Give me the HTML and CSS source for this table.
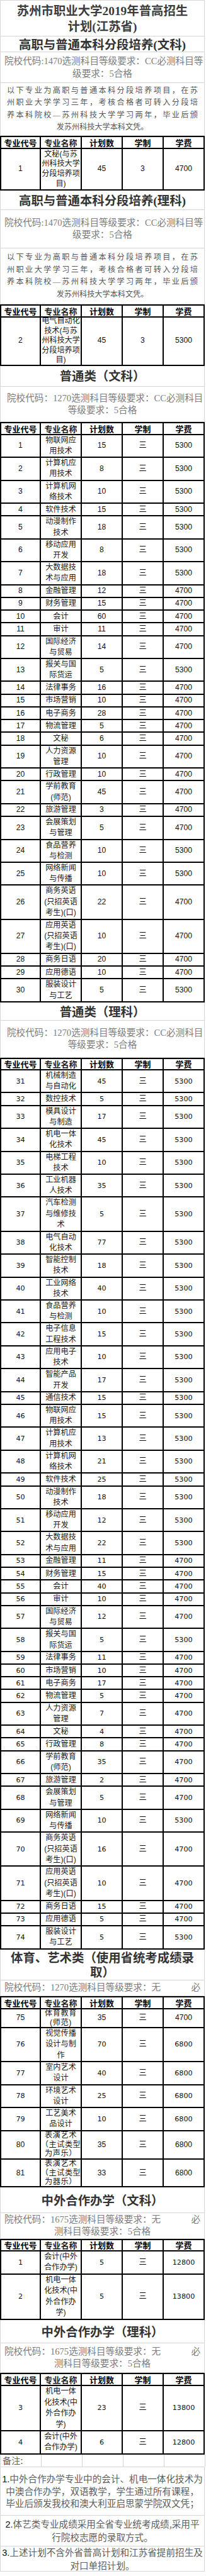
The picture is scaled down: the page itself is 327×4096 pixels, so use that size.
FILE: index.html
```html
<!DOCTYPE html>
<html lang="zh-CN">
<head>
<meta charset="utf-8">
<title>苏州市职业大学2019年普高招生计划(江苏省)</title>
<link rel="stylesheet" href="styles.css">
</head>
<body>
<div class="sheet">
  <div class="blk title">苏州市职业大学2019年普高招生<br>计划(江苏省)</div>

  <div class="blk sec s1">高职与普通本科分段培养(文科)</div>
  <div class="blk info i1"><div class="jl p8">院校代码:1470选测科目等级要求：CC必测科目等</div><div>级要求：5合格</div></div>
  <div class="blk desc d1"><div class="jl pd">以下专业为高职与普通本科分段培养项目，在苏</div><div class="jl pd">州职业大学学习三年，考核合格者可转入分段培</div><div class="jl pd">养本科院校—苏州科技大学学习两年，毕业后颁</div><div>发苏州科技大学本科文凭。</div></div>
  <div class="tbl">
    <div class="row hd hd1"><span>专业代号</span><span>专业名称</span><span>计划数</span><span>学制</span><span>学费</span></div>
    <div class="row ra"><span>1</span><span class="nm">文秘(与苏<br>州科技大学<br>分段培养项<br>目)</span><span>45</span><span>3</span><span>4700</span></div>
  </div>

  <div class="blk sec s2">高职与普通本科分段培养(理科)</div>
  <div class="blk info i2"><div class="jl p8">院校代码:1470选测科目等级要求：CC必测科目等</div><div>级要求：5合格</div></div>
  <div class="blk desc d2"><div class="jl pd">以下专业为高职与普通本科分段培养项目，在苏</div><div class="jl pd">州职业大学学习三年，考核合格者可转入分段培</div><div class="jl pd">养本科院校—苏州科技大学学习两年，毕业后颁</div><div>发苏州科技大学本科文凭。</div></div>
  <div class="tbl">
    <div class="row hd"><span>专业代号</span><span>专业名称</span><span>计划数</span><span>学制</span><span>学费</span></div>
    <div class="row rb"><span>2</span><span class="nm">电气自动化<br>技术(与苏<br>州科技大学<br>分段培养项<br>目)</span><span>45</span><span>3</span><span>5300</span></div>
  </div>

  <div class="blk sec s3">普通类（文科）</div>
  <div class="blk info i3"><div class="jl p13">院校代码：1270选测科目等级要求：CC必测科目</div><div>等级要求：5合格</div></div>
  <div class="tbl">
    <div class="row hd"><span>专业代号</span><span>专业名称</span><span>计划数</span><span>学制</span><span>学费</span></div>
    <div class="row r2"><span>1</span><span>物联网应<br>用技术</span><span>15</span><span>三</span><span>5300</span></div>
    <div class="row r2"><span>2</span><span>计算机应<br>用技术</span><span>8</span><span>三</span><span>5300</span></div>
    <div class="row r2"><span>3</span><span>计算机网<br>络技术</span><span>10</span><span>三</span><span>5300</span></div>
    <div class="row r1"><span>4</span><span>软件技术</span><span>15</span><span>三</span><span>5300</span></div>
    <div class="row r2"><span>5</span><span>动漫制作<br>技术</span><span>18</span><span>三</span><span>5300</span></div>
    <div class="row r2"><span>6</span><span>移动应用<br>开发</span><span>8</span><span>三</span><span>5300</span></div>
    <div class="row r2"><span>7</span><span>大数据技<br>术与应用</span><span>18</span><span>三</span><span>5300</span></div>
    <div class="row r1"><span>8</span><span>金融管理</span><span>12</span><span>三</span><span>4700</span></div>
    <div class="row r1"><span>9</span><span>财务管理</span><span>15</span><span>三</span><span>4700</span></div>
    <div class="row r1"><span>10</span><span>会计</span><span>60</span><span>三</span><span>4700</span></div>
    <div class="row r1"><span>11</span><span>审计</span><span>11</span><span>三</span><span>4700</span></div>
    <div class="row r2"><span>12</span><span>国际经济<br>与贸易</span><span>14</span><span>三</span><span>4700</span></div>
    <div class="row r2"><span>13</span><span>报关与国<br>际货运</span><span>5</span><span>三</span><span>5300</span></div>
    <div class="row r1"><span>14</span><span>法律事务</span><span>16</span><span>三</span><span>4700</span></div>
    <div class="row r1"><span>15</span><span>市场营销</span><span>10</span><span>三</span><span>4700</span></div>
    <div class="row r1"><span>16</span><span>电子商务</span><span>28</span><span>三</span><span>4700</span></div>
    <div class="row r1"><span>17</span><span>物流管理</span><span>5</span><span>三</span><span>4700</span></div>
    <div class="row r1"><span>18</span><span>文秘</span><span>6</span><span>三</span><span>4700</span></div>
    <div class="row r2"><span>19</span><span>人力资源<br>管理</span><span>10</span><span>三</span><span>4700</span></div>
    <div class="row r1"><span>20</span><span>行政管理</span><span>10</span><span>三</span><span>4700</span></div>
    <div class="row r2"><span>21</span><span>学前教育<br>(师范)</span><span>45</span><span>三</span><span>4700</span></div>
    <div class="row r1"><span>22</span><span>旅游管理</span><span>3</span><span>三</span><span>4700</span></div>
    <div class="row r2"><span>23</span><span>会展策划<br>与管理</span><span>5</span><span>三</span><span>4700</span></div>
    <div class="row r2"><span>24</span><span>食品营养<br>与检测</span><span>10</span><span>三</span><span>5300</span></div>
    <div class="row r2"><span>25</span><span>网络新闻<br>与传播</span><span>10</span><span>三</span><span>5300</span></div>
    <div class="row r3"><span>26</span><span>商务英语<br>(只招英语<br>考生)(口)</span><span>22</span><span>三</span><span>4700</span></div>
    <div class="row r3"><span>27</span><span>应用英语<br>(只招英语<br>考生)(口)</span><span>10</span><span>三</span><span>4700</span></div>
    <div class="row r1"><span>28</span><span>商务日语</span><span>20</span><span>三</span><span>4700</span></div>
    <div class="row r1"><span>29</span><span>应用德语</span><span>10</span><span>三</span><span>4700</span></div>
    <div class="row r2"><span>30</span><span>服装设计<br>与工艺</span><span>5</span><span>三</span><span>5300</span></div>
  </div>

  <div class="blk sec s4">普通类（理科）</div>
  <div class="blk info i4"><div class="jl p13">院校代码：1270选测科目等级要求：CC必测科目</div><div>等级要求：5合格</div></div>
  <div class="tbl wide">
    <div class="row hd"><span>专业代号</span><span>专业名称</span><span>计划数</span><span>学制</span><span>学费</span></div>
    <div class="row r2"><span>31</span><span>机械制造<br>与自动化</span><span>45</span><span>三</span><span>5300</span></div>
    <div class="row r1"><span>32</span><span>数控技术</span><span>5</span><span>三</span><span>5300</span></div>
    <div class="row r2"><span>33</span><span>模具设计<br>与制造</span><span>17</span><span>三</span><span>5300</span></div>
    <div class="row r2"><span>34</span><span>机电一体<br>化技术</span><span>45</span><span>三</span><span>5300</span></div>
    <div class="row r2"><span>35</span><span>电梯工程<br>技术</span><span>10</span><span>三</span><span>5300</span></div>
    <div class="row r2"><span>36</span><span>工业机器<br>人技术</span><span>35</span><span>三</span><span>5300</span></div>
    <div class="row r3"><span>37</span><span>汽车检测<br>与维修技<br>术</span><span>5</span><span>三</span><span>5300</span></div>
    <div class="row r2"><span>38</span><span>电气自动<br>化技术</span><span>77</span><span>三</span><span>5300</span></div>
    <div class="row r2"><span>39</span><span>智能控制<br>技术</span><span>18</span><span>三</span><span>5300</span></div>
    <div class="row r2"><span>40</span><span>工业网络<br>技术</span><span>40</span><span>三</span><span>5300</span></div>
    <div class="row r2"><span>41</span><span>食品营养<br>与检测</span><span>10</span><span>三</span><span>5300</span></div>
    <div class="row r2"><span>42</span><span>电子信息<br>工程技术</span><span>15</span><span>三</span><span>5300</span></div>
    <div class="row r2"><span>43</span><span>应用电子<br>技术</span><span>10</span><span>三</span><span>5300</span></div>
    <div class="row r2"><span>44</span><span>智能产品<br>开发</span><span>17</span><span>三</span><span>5300</span></div>
    <div class="row r1"><span>45</span><span>通信技术</span><span>15</span><span>三</span><span>5300</span></div>
    <div class="row r2"><span>46</span><span>物联网应<br>用技术</span><span>15</span><span>三</span><span>5300</span></div>
    <div class="row r2"><span>47</span><span>计算机应<br>用技术</span><span>13</span><span>三</span><span>5300</span></div>
    <div class="row r2"><span>48</span><span>计算机网<br>络技术</span><span>21</span><span>三</span><span>5300</span></div>
    <div class="row r1"><span>49</span><span>软件技术</span><span>25</span><span>三</span><span>5300</span></div>
    <div class="row r2"><span>50</span><span>动漫制作<br>技术</span><span>18</span><span>三</span><span>5300</span></div>
    <div class="row r2"><span>51</span><span>移动应用<br>开发</span><span>12</span><span>三</span><span>5300</span></div>
    <div class="row r2"><span>52</span><span>大数据技<br>术与应用</span><span>22</span><span>三</span><span>5300</span></div>
    <div class="row r1"><span>53</span><span>金融管理</span><span>11</span><span>三</span><span>4700</span></div>
    <div class="row r1"><span>54</span><span>财务管理</span><span>15</span><span>三</span><span>4700</span></div>
    <div class="row r1"><span>55</span><span>会计</span><span>40</span><span>三</span><span>4700</span></div>
    <div class="row r1"><span>56</span><span>审计</span><span>10</span><span>三</span><span>4700</span></div>
    <div class="row r2"><span>57</span><span>国际经济<br>与贸易</span><span>12</span><span>三</span><span>4700</span></div>
    <div class="row r2"><span>58</span><span>报关与国<br>际货运</span><span>5</span><span>三</span><span>5300</span></div>
    <div class="row r1"><span>59</span><span>法律事务</span><span>11</span><span>三</span><span>4700</span></div>
    <div class="row r1"><span>60</span><span>市场营销</span><span>10</span><span>三</span><span>4700</span></div>
    <div class="row r1"><span>61</span><span>电子商务</span><span>17</span><span>三</span><span>4700</span></div>
    <div class="row r1"><span>62</span><span>物流管理</span><span>5</span><span>三</span><span>4700</span></div>
    <div class="row r2"><span>63</span><span>人力资源<br>管理</span><span>7</span><span>三</span><span>4700</span></div>
    <div class="row r1"><span>64</span><span>文秘</span><span>4</span><span>三</span><span>4700</span></div>
    <div class="row r1"><span>65</span><span>行政管理</span><span>8</span><span>三</span><span>4700</span></div>
    <div class="row r2"><span>66</span><span>学前教育<br>(师范)</span><span>35</span><span>三</span><span>4700</span></div>
    <div class="row r1"><span>67</span><span>旅游管理</span><span>2</span><span>三</span><span>4700</span></div>
    <div class="row r2"><span>68</span><span>会展策划<br>与管理</span><span>5</span><span>三</span><span>4700</span></div>
    <div class="row r2"><span>69</span><span>网络新闻<br>与传播</span><span>10</span><span>三</span><span>5300</span></div>
    <div class="row r3"><span>70</span><span>商务英语<br>(只招英语<br>考生)(口)</span><span>16</span><span>三</span><span>4700</span></div>
    <div class="row r3"><span>71</span><span>应用英语<br>(只招英语<br>考生)(口)</span><span>10</span><span>三</span><span>4700</span></div>
    <div class="row r1"><span>72</span><span>商务日语</span><span>15</span><span>三</span><span>4700</span></div>
    <div class="row r1"><span>73</span><span>应用德语</span><span>5</span><span>三</span><span>4700</span></div>
    <div class="row r2"><span>74</span><span>服装设计<br>与工艺</span><span>5</span><span>三</span><span>5300</span></div>
  </div>

  <div class="blk sec s5">体育、艺术类（使用省统考成绩录<br>取）</div>
  <div class="blk info i5"><div class="split"><span>院校代码：1270选测科目等级要求：无</span><span>必</span></div><div>测科目等级要求：5合格</div></div>
  <div class="tbl">
    <div class="row hd hd5"><span>专业代号</span><span>专业名称</span><span>计划数</span><span>学制</span><span>学费</span></div>
    <div class="row r75"><span>75</span><span class="sp">体育教育<br>(师范)</span><span>35</span><span>三</span><span>4700</span></div>
    <div class="row r3 wide"><span>76</span><span>视觉传播<br>设计与制<br>作</span><span>70</span><span>三</span><span>6800</span></div>
    <div class="row r2 wide"><span>77</span><span>室内艺术<br>设计</span><span>40</span><span>三</span><span>6800</span></div>
    <div class="row r2 wide"><span>78</span><span>环境艺术<br>设计</span><span>25</span><span>三</span><span>6800</span></div>
    <div class="row r2 wide"><span>79</span><span>工艺美术<br>品设计</span><span>10</span><span>三</span><span>6800</span></div>
    <div class="row r80"><span>80</span><span class="sp">表演艺术<br>（主试类型<br>为声乐）</span><span>35</span><span>三</span><span>6800</span></div>
    <div class="row r81"><span>81</span><span class="sp">表演艺术<br>（主试类型<br>为器乐）</span><span>33</span><span>三</span><span>6800</span></div>
  </div>

  <div class="blk sec s6">中外合作办学（文科）</div>
  <div class="blk info i6"><div class="split"><span>院校代码：1675选测科目等级要求：无</span><span>必</span></div><div>测科目等级要求：5合格</div></div>
  <div class="tbl wide">
    <div class="row hd"><span>专业代号</span><span>专业名称</span><span>计划数</span><span>学制</span><span>学费</span></div>
    <div class="row rz1"><span>1</span><span>会计(中外<br>合作办学)</span><span>5</span><span>三</span><span>12800</span></div>
    <div class="row r4"><span>2</span><span>机电一体<br>化技术(中<br>外合作办<br>学)</span><span>5</span><span>三</span><span>13800</span></div>
  </div>

  <div class="blk sec s7">中外合作办学（理科）</div>
  <div class="blk info i7"><div class="split"><span>院校代码：1675选测科目等级要求：无</span><span>必</span></div><div>测科目等级要求：5合格</div></div>
  <div class="tbl wide">
    <div class="row hd hd7"><span>专业代号</span><span>专业名称</span><span>计划数</span><span>学制</span><span>学费</span></div>
    <div class="row r4"><span>3</span><span>机电一体<br>化技术(中<br>外合作办<br>学)</span><span>23</span><span>三</span><span>13800</span></div>
    <div class="row r2"><span>4</span><span>会计(中外<br>合作办学)</span><span>6</span><span>三</span><span>12800</span></div>
  </div>

  <div class="remark"><span class="rk">备注:</span><span></span><span></span><span></span><span></span></div>
  <div class="blk note n1"><div><b>1.</b>中外合作办学专业中的会计、机电一体化技术为</div><div>中澳合作办学，双语教学，学生通过所有课程，</div><div>毕业后颁发我校和澳大利亚启思蒙学院双文凭；</div></div>
  <div class="blk note n2"><div><b>2.</b>体艺类专业成绩采用全省专业统考成绩,采用平</div><div>行院校志愿的录取方式。</div></div>
  <div class="blk note n3"><div><b>3.</b>上述计划不含外省普高计划和江苏省提前招生及</div><div>对口单招计划。</div></div>
</div>
</body>
</html>
```

FILE: styles.css
```css
* {
  box-sizing: border-box;
  margin: 0;
  padding: 0;
}

html,
body {
  background: #ffffff;
}

body {
  margin: 0;
  width: 327px;
}

.sheet {
  width: 325px;
  border-top: 1px solid #d6d6d6;
  font-family: "Liberation Serif", "Noto Sans CJK SC", serif;
}

/* gray spreadsheet blocks */
.blk {
  display: flex;
  flex-direction: column;
  justify-content: center;
  align-items: center;
  text-align: center;
  overflow: hidden;
  white-space: nowrap;
  border-left: 1px solid #d6d6d6;
  border-right: 1px solid #d6d6d6;
  border-bottom: 1px solid #d6d6d6;
}

.jl {
  width: 100%;
  text-align: justify;
  text-align-last: justify;
}

.p8 { padding: 0 5px 0 6px; }
.p13 { padding: 0 10px 0 10px; }
.pd { padding: 0 10px 0 10px; }

.title {
  height: 57.3px;
  font-size: 19.4px;
  font-weight: 700;
  line-height: 25px;
  color: #3c3c3c;
  padding-top: 1px;
}

.sec {
  font-size: 19.4px;
  font-weight: 700;
  line-height: 23.5px;
  color: #333333;
  padding-top: 3px;
}

.s1 { height: 24.3px; }
.s2 { height: 30.8px; }
.s3 { height: 33.2px; }
.s4 { height: 29.2px; }
.s5 { height: 49.7px; }
.s6 { height: 41.1px; }
.s7 { height: 37px; }

.info {
  font-size: 14.6px;
  line-height: 19.5px;
  color: #7d7d7d;
}

.i1 { height: 49.4px; line-height: 20.2px; }
.i2 { height: 61.6px; line-height: 18.9px; }
.i3 { height: 56.7px; line-height: 18.9px; }
.i4 { height: 58.9px; line-height: 18.9px; }
.i5 {
  height: 24.5px;
  justify-content: flex-start;
  padding-top: 1px;
  line-height: 21px;
}
.i6 { height: 40.5px; line-height: 18.9px; }
.i7 { height: 47.5px; line-height: 18.9px; }

.split {
  width: 100%;
  display: flex;
  justify-content: space-between;
  padding: 0 6px 0 6px;
}

.desc {
  font-size: 12.15px;
  line-height: 19.4px;
  color: #575757;
}

.d1 { height: 84.2px; }
.d2 { height: 89.1px; }

/* black bordered tables */
.tbl {
  border-top: 2px solid #000000;
  font-family: "Liberation Sans", "Noto Sans CJK SC", sans-serif;
  color: #111111;
}

.row {
  display: grid;
  grid-template-columns: 63px 65px 65px 65px 65px;
  border-left: 2px solid #000000;
  border-bottom: 2px solid #000000;
  height: 20.25px;
}

.row > span {
  display: flex;
  align-items: center;
  justify-content: center;
  text-align: center;
  border-right: 2px solid #000000;
  overflow: hidden;
  white-space: nowrap;
  font-size: 12.15px;
  line-height: 17px;
}

.row > span:nth-child(2) {
  color: #1c1c1c;
}

.wide .row > span:nth-child(1),
.wide .row > span:nth-child(3),
.wide .row > span:nth-child(5),
.row.wide > span:nth-child(1),
.row.wide > span:nth-child(3),
.row.wide > span:nth-child(5) {
  font-family: "DejaVu Sans", "Noto Sans CJK SC", sans-serif;
  font-size: 11.2px;
}

.hd > span {
  font-family: "Noto Sans CJK SC", sans-serif;
  font-weight: 700;
  font-size: 12.96px;
  color: #000000;
}

.wide .row.hd > span {
  font-family: "Noto Sans CJK SC", sans-serif;
  font-size: 12.96px;
}

.hd { height: 18.25px; }
.hd1 { height: 19.1px; }
.hd5,
.hd7 { height: 18.8px; }

.r1 { height: 20.25px; }
.r2 { height: 36.45px; }
.r2 > span { line-height: 17.2px; }
.r3 { height: 54.2px; }
.r3 > span { line-height: 17.4px; }
.r4 { height: 72.1px; }
.r4 > span { line-height: 17.5px; }
.rz1 { height: 36.7px; }

.ra { height: 65.6px; }
.rb { height: 77px; }
.ra > span,
.rb > span { line-height: 15.6px; }

.r75 { height: 30.5px; }
.r80 { height: 45.1px; }
.r81 { height: 44.6px; }
.r75 > span,
.r80 > span,
.r81 > span { line-height: 14.6px; }

.sp {
  letter-spacing: 0.6px;
}

/* remark row */
.remark {
  display: grid;
  grid-template-columns: 65px 65px 65px 65px 65px;
  height: 20.25px;
  border-left: 1px solid #d6d6d6;
  border-bottom: 1px solid #d6d6d6;
}

.remark > span {
  border-right: 1px solid #d6d6d6;
}

.rk {
  font-family: "Noto Sans CJK SC", sans-serif;
  font-size: 14.2px;
  line-height: 19px;
  color: #666666;
  padding-left: 3px;
}

.note {
  font-family: "Noto Sans CJK SC", sans-serif;
  font-size: 14.6px;
  color: #5e5e5e;
}

.note b {
  font-family: "Liberation Sans", sans-serif;
  font-weight: 400;
  color: #111111;
}

.n1 { height: 77px; line-height: 18.9px; }
.n2 { height: 48.6px; line-height: 20px; }
.n3 { height: 40.5px; line-height: 19.7px; }
```
